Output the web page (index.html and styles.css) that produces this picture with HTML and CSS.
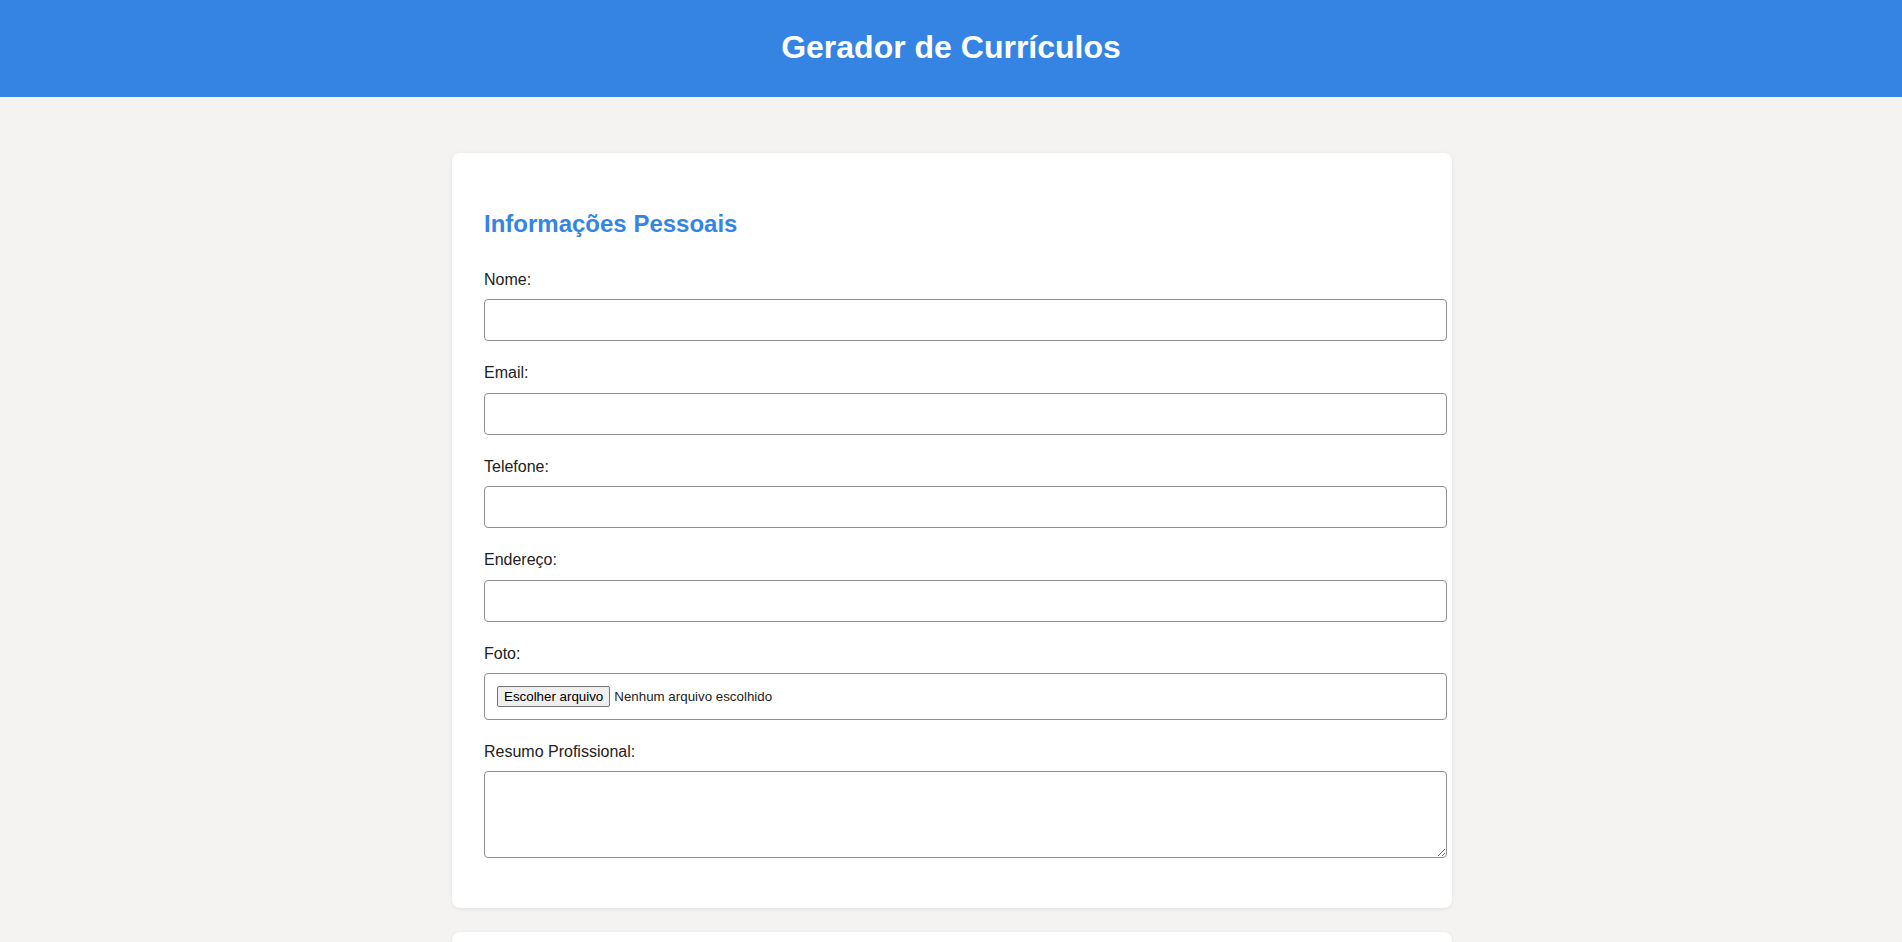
FILE: index.html
```html
<!DOCTYPE html>
<html lang="pt-BR">
<head>
<meta charset="utf-8">
<title>Gerador de Currículos</title>
<link rel="stylesheet" href="styles.css">
</head>
<body>
<header class="topbar">
  <h1 class="topbar-title">Gerador de Currículos</h1>
</header>
<main class="container">
  <section class="card">
    <h2 class="section-title">Informações Pessoais</h2>
    <div class="form-group">
      <label class="field-label" for="nome">Nome:</label>
      <input class="field" id="nome" type="text">
    </div>
    <div class="form-group">
      <label class="field-label" for="email">Email:</label>
      <input class="field" id="email" type="email">
    </div>
    <div class="form-group">
      <label class="field-label" for="telefone">Telefone:</label>
      <input class="field" id="telefone" type="tel">
    </div>
    <div class="form-group">
      <label class="field-label" for="endereco">Endereço:</label>
      <input class="field" id="endereco" type="text">
    </div>
    <div class="form-group">
      <span class="field-label">Foto:</span>
      <div class="field file-field">
        <label class="file-btn">Escolher arquivo<input class="file-input" type="file" accept="image/*"></label>
        <span class="file-name">Nenhum arquivo escolhido</span>
      </div>
    </div>
    <div class="form-group">
      <label class="field-label" for="resumo">Resumo Profissional:</label>
      <textarea class="field field-area" id="resumo" rows="4"></textarea>
    </div>
  </section>
  <section class="card card-next"></section>
</main>
</body>
</html>
```
FILE: styles.css
```css
body {
  margin: 0;
  background: #f4f3f1;
  font-family: "Liberation Sans", Arial, sans-serif;
  color: #222;
}

.topbar {
  background: #3584e4;
  padding: 29px 0 31px;
  text-align: center;
}

.topbar-title {
  margin: 0;
  color: #fff;
  font-size: 32px;
  line-height: 37px;
  font-weight: bold;
}

.container {
  box-sizing: border-box;
  max-width: 1002px;
  padding-left: 2px;
  margin: 56px auto 0;
}

.card {
  background: #fff;
  border-radius: 8px;
  box-shadow: 0 1px 4px rgba(0, 0, 0, 0.08);
  padding: 32px;
  margin-bottom: 24px;
}

.card-next {
  min-height: 120px;
}

.section-title {
  margin: 25px 0 33px;
  color: #3584e4;
  font-size: 24px;
  font-weight: bold;
}

.form-group {
  margin-bottom: 23px;
}

.form-group:last-child {
  margin-bottom: 18px;
}

.field-label {
  display: block;
  margin-bottom: 10px;
  font-size: 16px;
  line-height: 18.4px;
  color: #222;
}

.field {
  display: block;
  width: 100%;
  height: 16px;
  padding: 12px 13px 12px 12px;
  margin: 0;
  border: 1px solid #8f8f8f;
  border-radius: 4px;
  background: #fff;
  font-family: "Liberation Sans", Arial, sans-serif;
  font-size: 13.33px;
  color: #222;
}

.file-field {
  display: flex;
  align-items: center;
  height: 21px;
  padding-top: 11.5px;
  padding-bottom: 12.5px;
}

.file-btn {
  display: inline-flex;
  align-items: center;
  height: 21px;
  box-sizing: border-box;
  padding: 0 6px;
  margin-right: 4px;
  border: 1px solid #767676;
  border-radius: 2px;
  background: #efefef;
  color: #000;
  font-size: 13.33px;
  cursor: pointer;
}

.file-input {
  display: none;
}

.file-name {
  font-size: 13.33px;
  color: #222;
}

.field-area {
  height: 61px;
  resize: vertical;
}
```
